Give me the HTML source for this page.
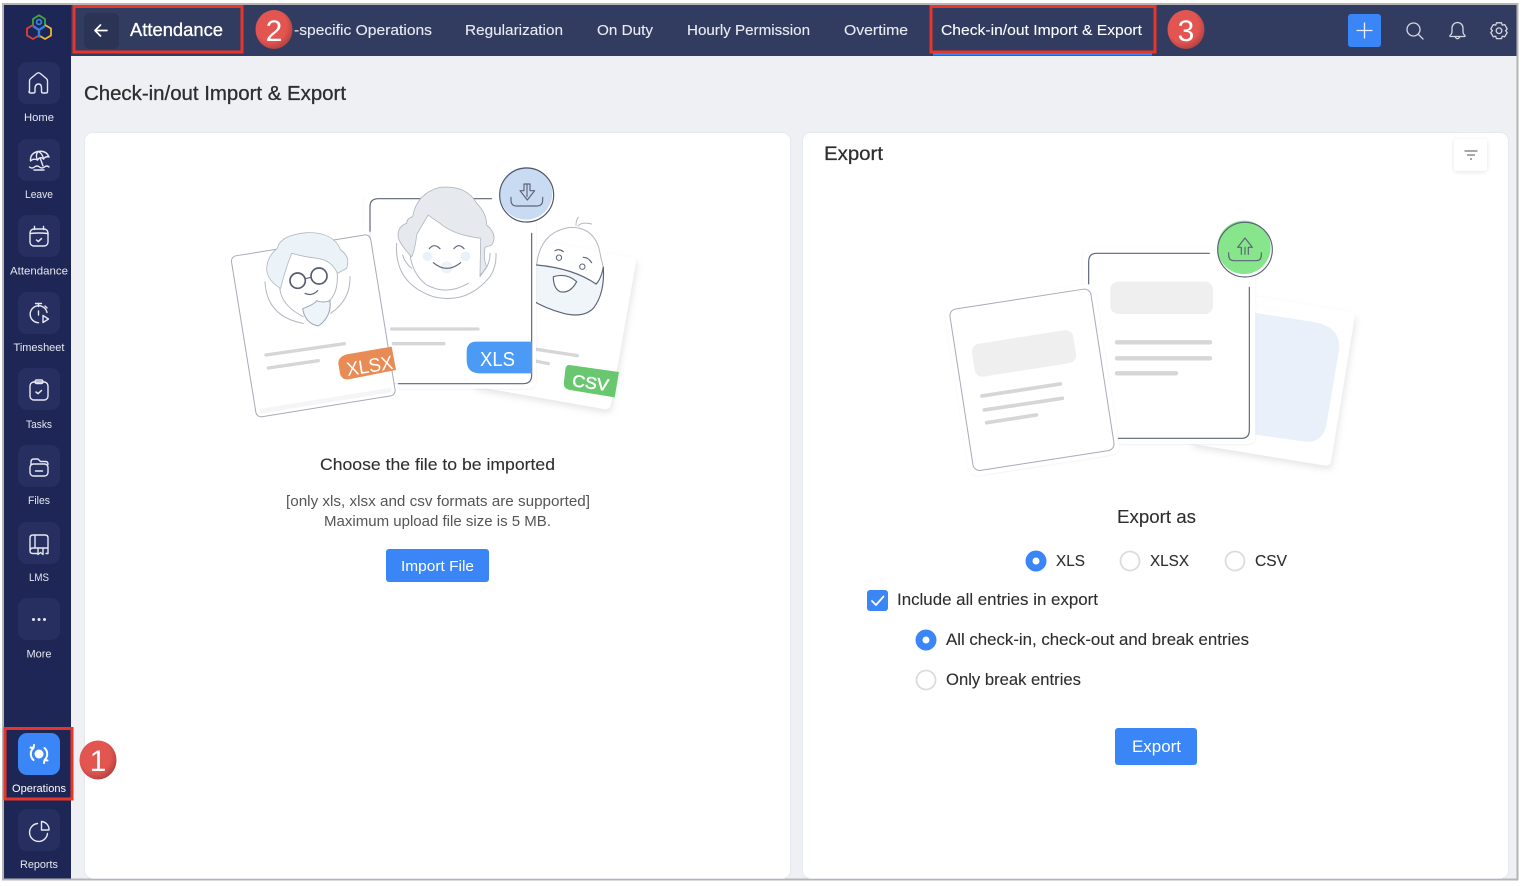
<!DOCTYPE html>
<html lang="en"><head><meta charset="utf-8"><title>Check-in/out Import &amp; Export</title>
<style>
html,body{margin:0;padding:0;background:#fff;width:1524px;height:886px;overflow:hidden}
svg{display:block}
text{font-family:"Liberation Sans",sans-serif}
.side{fill:#e6e8f0;font-size:11px;text-anchor:middle}
.nav{fill:#e9ebf2;font-size:15px;stroke:#e9ebf2;stroke-width:.12}
.dk{fill:#2e2e2e;stroke:#2e2e2e;stroke-width:.12}
.ic{fill:none;stroke:#e6e8f0;stroke-width:1.400;stroke-linecap:round;stroke-linejoin:round}
.ln{fill:none;stroke:#d6d6d6;stroke-width:10;stroke-linecap:round}
.gy{fill:none;stroke:#b3b7c1;stroke-width:3;stroke-linecap:round;stroke-linejoin:round}
.dg{fill:none;stroke:#5e6478;stroke-width:3.500;stroke-linecap:round;stroke-linejoin:round}
</style></head><body>
<svg width="1524" height="886" viewBox="0 0 1524 886" xmlns="http://www.w3.org/2000/svg">
<defs>
<filter id="sh" x="-20%" y="-20%" width="140%" height="140%"><feDropShadow dx="6" dy="10" stdDeviation="10" flood-color="#000" flood-opacity=".1"/></filter>
<filter id="s2" x="-30%" y="-30%" width="160%" height="160%"><feDropShadow dx="0" dy="1" stdDeviation="2.500" flood-color="#000" flood-opacity=".1"/></filter>
<radialGradient id="ball" cx=".42" cy=".4" r=".68"><stop offset=".62" stop-color="#e25551"/><stop offset="1" stop-color="#a83c3a"/></radialGradient>
</defs>

<!-- frame -->
<rect x="3" y="4" width="1514.500" height="875.500" fill="#eef0f4" stroke="#b5b5b5" stroke-width="2"/>
<rect x="4" y="5" width="67" height="873.500" fill="#1d2654"/>
<rect x="71" y="5" width="1445.500" height="51" fill="#323c60"/>

<!-- logo -->
<g fill="none" stroke-width="1.800" stroke-linejoin="round">
<path d="M33 26v-7l6-3.700 6 3.700v7" stroke="#3fa648"/>
<path d="M33 25l-6 3.500v7l6 3.500 5-3" stroke="#e2403a"/>
<path d="M45 25l6 3.500v7l-6 3.500-5-3" stroke="#efb72f"/>
<circle cx="39" cy="22" r="2.400" stroke="#3a7fd8"/>
<path d="M33 26l6 4 6-4M39 30v7.500" stroke="#3a7fd8" stroke-width="2.400"/>
</g>

<!-- sidebar tiles -->
<g fill="#262f60">
<rect x="18" y="62" width="42" height="42" rx="9"/>
<rect x="18" y="139" width="42" height="42" rx="9"/>
<rect x="18" y="215" width="42" height="42" rx="9"/>
<rect x="18" y="292" width="42" height="42" rx="9"/>
<rect x="18" y="368" width="42" height="42" rx="9"/>
<rect x="18" y="445" width="42" height="42" rx="9"/>
<rect x="18" y="522" width="42" height="42" rx="9"/>
<rect x="18" y="598" width="42" height="42" rx="9"/>
<rect x="18" y="809" width="42" height="42" rx="9"/>
</g>
<rect x="18" y="733" width="42" height="42" rx="9" fill="#3a86f6"/>

<!-- sidebar icons -->
<path class="ic" d="M30 91.500v-10.500q0-1.500 1.200-2.500l6-5q1.800-1.400 3.600 0l6 5q1.200 1 1.200 2.500v10.500q0 1.500-1.500 1.500h-3q-1.500 0-1.500-1.500v-3.500q0-4-3-4t-3.500 4v3.500q0 1.500-1.500 1.500h-3q-1.500 0-1.500-1.500z" transform="translate(-.5 0)"/>
<g class="ic"><path d="M30.500 161Q30 153 38 151.500Q46 150 49 157Q45.500 156 43.500 159Q40.500 156 37.500 160Q33.500 158 30.500 161z"/><path d="M38 151.500Q35 155 37.500 160M38 151.500Q42.500 153 43.500 159M40.500 159L43 166"/><path d="M29.500 167q2.500 2 5 0t5 0 5 0 4.500 0M34 170h10"/></g>
<g class="ic"><rect x="30" y="229" width="18" height="17" rx="4"/><path d="M30 233.500q9-1 18 0M34.500 226.500v3M43.500 226.500v3"/><path d="M36.500 240l1.800 1.600 3.200-3" stroke-width="1.500"/></g>
<g class="ic"><path d="M35.500 303.500h6M38.500 303.500v3M45 306l2 2"/><path d="M47 312.500a8.500 8.500 0 1 0-8.500 10.200"/><path d="M38.500 311v4"/><path d="M43 315.500l5.500 3.500-5.500 3.500z"/></g>
<g class="ic"><rect x="30" y="382" width="18" height="18" rx="4"/><rect x="35" y="380" width="8" height="3.500" rx="1.500"/><path d="M36 392l2 1.700 3.500-3.200" stroke-width="1.500"/></g>
<g class="ic"><path d="M31 465v-3q0-3 3-3h4l2.500 2.500h5q2.500 0 2.500 3"/><rect x="30" y="464" width="18" height="12" rx="3.500"/><path d="M35.500 471h7"/></g>
<g class="ic"><path d="M30 551v-13q0-3 3-3h12q3 0 3 3v15.500h-2M35 535v13M30 551q0-3 3-3h15M30 551q0 2.500 3 2.500h4M38 548v6.500l2.500-2 2.500 2v-6.500"/></g>
<g fill="#e6e8f0"><circle cx="33.500" cy="619.500" r="1.500"/><circle cx="39" cy="619.500" r="1.500"/><circle cx="44.500" cy="619.500" r="1.500"/></g>
<g fill="none" stroke="#fff" stroke-width="2" stroke-linecap="round" stroke-linejoin="round"><path d="M33.500 760A8 8 0 0 1 33.500 748M44.500 748A8 8 0 0 1 44.500 760M30.500 747.500l3 .5 .5-3M47.500 760.500l-3-.5-.5 3"/></g>
<circle cx="39" cy="754" r="4.500" fill="#fff"/>
<g class="ic"><path d="M37.500 823.500A9 9 0 1 0 47.500 833.500"/><path d="M41.500 821.500V830H49A8 8 0 0 0 41.500 821.500z"/></g>

<!-- sidebar labels -->
<text class="side" x="39" y="121" textLength="30" lengthAdjust="spacingAndGlyphs">Home</text>
<text class="side" x="39" y="198" textLength="28" lengthAdjust="spacingAndGlyphs">Leave</text>
<text class="side" x="39" y="274.500" textLength="58" lengthAdjust="spacingAndGlyphs">Attendance</text>
<text class="side" x="39" y="351" textLength="51" lengthAdjust="spacingAndGlyphs">Timesheet</text>
<text class="side" x="39" y="428" textLength="26" lengthAdjust="spacingAndGlyphs">Tasks</text>
<text class="side" x="39" y="504" textLength="22" lengthAdjust="spacingAndGlyphs">Files</text>
<text class="side" x="39" y="581" textLength="20" lengthAdjust="spacingAndGlyphs">LMS</text>
<text class="side" x="39" y="657.500" textLength="25" lengthAdjust="spacingAndGlyphs">More</text>
<text class="side" x="39" y="792" textLength="54" lengthAdjust="spacingAndGlyphs" style="fill:#fff">Operations</text>
<text class="side" x="39" y="868" textLength="38" lengthAdjust="spacingAndGlyphs">Reports</text>

<!-- header -->
<rect x="84" y="13" width="35" height="36" rx="6" fill="#2b3455"/>
<path d="M107 30.500H95M100.500 25l-5.500 5.500 5.500 5.500" fill="none" stroke="#fff" stroke-width="1.700" stroke-linecap="round" stroke-linejoin="round"/>
<text x="130" y="36" font-size="18" fill="#fff" stroke="#fff" stroke-width=".3" textLength="93" lengthAdjust="spacingAndGlyphs">Attendance</text>
<text class="nav" x="294" y="35" textLength="138" lengthAdjust="spacingAndGlyphs">-specific Operations</text>
<text class="nav" x="465" y="35" textLength="98" lengthAdjust="spacingAndGlyphs">Regularization</text>
<text class="nav" x="597" y="35" textLength="56" lengthAdjust="spacingAndGlyphs">On Duty</text>
<text class="nav" x="687" y="35" textLength="123" lengthAdjust="spacingAndGlyphs">Hourly Permission</text>
<text class="nav" x="844" y="35" textLength="64" lengthAdjust="spacingAndGlyphs">Overtime</text>
<text class="nav" x="941" y="35" textLength="201" lengthAdjust="spacingAndGlyphs" style="fill:#fff">Check-in/out Import &amp; Export</text>
<rect x="933" y="53" width="219" height="2.500" fill="#3a86f6"/>

<rect x="1348" y="14" width="33" height="33" rx="3" fill="#3a86f6"/>
<path d="M1356.500 30.500h16M1364.500 22.500v16" stroke="#e8f0ff" stroke-width="1.300" fill="none"/>
<g fill="none" stroke="#d4d7e2" stroke-width="1.300" stroke-linecap="round" stroke-linejoin="round">
<circle cx="1413.500" cy="29.500" r="6.500"/><path d="M1418.500 34.500l4.500 4.500"/>
<path d="M1450 35.500q2-1.500 2-4v-3.500a5.500 5.500 0 0 1 11 0v3.500q0 2.500 2 4v1h-15z"/><path d="M1455.500 37.500q2 2.500 4 0"/>
<path d="M1496.500 22.800h5l.8 2.300 2.400-.5 2.500 4.300-1.600 1.800 1.600 1.800-2.500 4.300-2.400-.5-.8 2.300h-5l-.8-2.300-2.400.5-2.500-4.300 1.600-1.800-1.600-1.800 2.500-4.300 2.400.5z"/><circle cx="1499" cy="30.700" r="2.800"/>
</g>

<!-- title -->
<text class="dk" x="84" y="100" font-size="20" style="stroke-width:.3" textLength="262" lengthAdjust="spacingAndGlyphs">Check-in/out Import &amp; Export</text>

<!-- cards -->
<rect x="84.500" y="132.500" width="706" height="746" rx="8" fill="#fff" stroke="#e6e9f0"/>
<rect x="802.500" y="132.500" width="706" height="746" rx="8" fill="#fff" stroke="#e6e9f0"/>

<!-- LEFT ILLUSTRATION -->
<g transform="translate(220 160) scale(.33333)">
 <!-- CSV card -->
 <g transform="translate(836 222) rotate(10)"><rect width="420" height="462" rx="16" fill="#fff" filter="url(#sh)"/></g>
 <path class="ln" d="M930 565L1072 587M930 600L985 611" stroke="#d9d9d9"/>
 <path d="M1048 615L1197 636L1184 712L1050 690Q1028 686 1032 665L1036 628Q1038 614 1048 615z" fill="#68c76f"/>
 <text x="1055" y="678" font-size="50" fill="#fff" stroke="#fff" stroke-width="1.500" transform="rotate(8 1055 678)" textLength="110" lengthAdjust="spacingAndGlyphs">CSV</text>
 <!-- baby -->
 <path d="M950 315Q960 215 1050 202Q1130 200 1142 290L1150 322" fill="#fff" class="gy"/>
 <path d="M950 315Q1060 325 1128 372Q1150 360 1150 322Q1155 400 1120 445Q1090 475 1030 460Q965 440 930 420Z" fill="#eff5f9"/>
 <path d="M950 315Q1060 325 1128 372" class="dg"/>
 <path d="M1150 322Q1155 400 1120 445Q1090 475 1030 460Q975 445 935 420" class="dg"/>
 <path d="M1128 372Q1142 360 1150 322" class="dg" stroke-width="2.500"/>
 <path d="M1000 350Q1040 338 1070 365Q1050 402 1020 395Q1000 385 1000 350z" fill="#fff" stroke="#5e6478" stroke-width="3.500" stroke-linejoin="round"/>
 <circle cx="1017" cy="293" r="8" fill="none" stroke="#5e6478" stroke-width="3"/>
 <circle cx="1087" cy="320" r="8" fill="none" stroke="#5e6478" stroke-width="3"/>
 <path d="M1005 272Q1018 265 1030 275M1090 292Q1105 292 1115 308" class="dg"/>
 <path d="M1068 196Q1068 180 1075 172M1074 198Q1085 185 1115 192" class="gy" stroke-width="2.500"/>

 <!-- middle card -->
 <rect x="432" y="100" width="516" height="586" rx="20" fill="#fff" filter="url(#s2)"/>
 <path d="M815 116H475Q450 116 450 140V645Q450 671 475 671H910Q935 671 935 645V220" class="dg"/>
 <path class="ln" d="M515 507H774M520 551H672"/>
 <path d="M770 545H936V640H780Q740 640 740 600V575Q740 545 770 545z" fill="#4b9af5"/>
 <text x="780" y="618" font-size="62" fill="#fff" textLength="105" lengthAdjust="spacingAndGlyphs">XLS</text>
 <!-- woman -->
 <path d="M530 250Q522 370 640 410Q740 435 810 350Q830 320 828 280" class="gy"/>
 <path d="M570 280Q575 340 620 375Q680 408 745 370" class="gy" stroke-width="2.500"/>
 <path d="M578 170Q590 100 660 82Q740 75 770 130Q800 160 800 195Q835 225 815 255L795 262Q790 300 800 320L780 350L782 235Q700 225 660 190Q630 170 625 165Q600 205 590 225Q585 270 575 290Q545 260 535 235Q530 200 560 190Q560 175 578 170z" fill="#e6e9ee" stroke="#b3b7c1" stroke-width="2.500" stroke-linejoin="round"/>
 <circle cx="622" cy="289" r="14" fill="#eaf1f8"/><circle cx="737" cy="289" r="14" fill="#eaf1f8"/><circle cx="680" cy="322" r="18" fill="#eef3f9"/>
 <path d="M628 266Q642 248 660 266M702 266Q716 248 732 266M640 308Q680 342 722 308" class="dg" stroke-width="3"/>
 <path d="M548 285Q552 305 575 325M810 280Q810 320 780 345" class="gy" stroke-width="2.500"/>

 <!-- front card -->
 <g transform="translate(32 290) rotate(-9.200)"><rect x="-12" y="-12" width="447" height="513" rx="24" fill="#fff" opacity=".85"/><rect width="423" height="489" rx="16" fill="#fff" stroke="#a6abb7" stroke-width="3"/><path d="M12 472H412" stroke="#f5f5f5" stroke-width="14" fill="none"/></g>
 <path class="ln" d="M138 585L373 551M145 624L295 602"/>
 <path d="M380 583L515 560L528 630L385 658Q365 660 360 640L355 610Q355 590 380 583z" fill="#e98b55"/>
 <text x="383" y="648" font-size="58" fill="#fff" transform="rotate(-9 383 648)" textLength="140" lengthAdjust="spacingAndGlyphs">XLSX</text>
 <!-- man -->
 <path d="M135 365Q140 470 250 490M390 350Q392 420 332 460" class="gy" stroke-width="2.500"/>
 <path d="M180 360Q170 430 250 470M352 340Q355 400 325 425" class="gy" stroke-width="2.500"/>
 <path d="M140 330Q140 290 172 265Q180 225 260 218Q340 215 362 270Q392 290 380 325L352 340Q335 300 290 295Q250 290 215 280Q195 330 182 385Q145 365 140 330z" fill="#ecf3f8" stroke="#b3b7c1" stroke-width="2.500" stroke-linejoin="round"/>
 <circle cx="233" cy="362" r="23" fill="#fff" stroke="#555b70" stroke-width="5"/>
 <circle cx="297" cy="348" r="24" fill="#fff" stroke="#555b70" stroke-width="5"/>
 <path d="M256 356L273 352" class="dg"/>
 <path d="M255 400Q275 410 293 392" class="dg" stroke-width="2.500"/>
 <path d="M248 446Q285 432 290 422Q310 430 330 422Q335 470 295 498Q255 490 248 446z" fill="#eef5fa" stroke="#9da3b1" stroke-width="3" stroke-linejoin="round"/>

 <!-- circle -->
 <circle cx="920" cy="102" r="81" fill="#fff"/>
 <circle cx="918" cy="100" r="79" fill="#c9daf3"/>
 <circle cx="920" cy="105" r="81" fill="none" stroke="#50566a" stroke-width="3.500"/>
 <path d="M873 112V120Q873 138 890 138H950Q968 138 968 120V112" class="dg"/>
 <path d="M912 72V92H900L922 120L944 92H930V72z" class="dg" stroke-width="3"/><path d="M921 72V110" class="dg" stroke-width="2.500"/>
</g>

<text class="dk" x="320" y="470" font-size="17" textLength="235" lengthAdjust="spacingAndGlyphs">Choose the file to be imported</text>
<text x="286" y="506" font-size="15" fill="#555" textLength="304" lengthAdjust="spacingAndGlyphs">[only xls, xlsx and csv formats are supported]</text>
<text x="324" y="526" font-size="15" fill="#555" textLength="227" lengthAdjust="spacingAndGlyphs">Maximum upload file size is 5 MB.</text>
<rect x="386" y="549" width="103" height="33" rx="3" fill="#3a86f6"/>
<text x="401" y="571" font-size="15" fill="#fff" textLength="73" lengthAdjust="spacingAndGlyphs">Import File</text>

<!-- RIGHT -->
<text class="dk" x="824" y="160" font-size="19" style="stroke-width:.25" textLength="59" lengthAdjust="spacingAndGlyphs">Export</text>
<rect x="1454" y="139" width="33" height="32" rx="3" fill="#fff" filter="url(#s2)"/>
<path d="M1464.500 151h13M1467 155h8M1470 159h2" stroke="#8a8a8a" stroke-width="1.400" fill="none"/>

<g transform="translate(940 210) scale(.33333)">
 <g transform="translate(826 240) rotate(9.300)"><rect width="425" height="466" rx="14" fill="#fff" filter="url(#sh)"/></g>
 <path d="M930 306L1120 336Q1205 350 1197 420L1160 640Q1150 700 1095 695L930 672z" fill="#e9f0f9"/>
 <rect x="428" y="112" width="518" height="590" rx="20" fill="#fff" filter="url(#s2)"/>
 <path d="M808 130H470Q446 130 446 155V660Q446 685 470 685H905Q928 685 928 660V232" class="dg" stroke-width="3"/>
 <rect x="511" y="215" width="308" height="97" rx="24" fill="#efefef"/>
 <path d="M531 397H810M531 445H810M531 490H708" stroke="#d6d6d6" stroke-width="13" stroke-linecap="round" fill="none"/>

 <g transform="translate(27 300) rotate(-8.800)"><rect x="-14" y="-14" width="456" height="518" rx="26" fill="#fff" filter="url(#s2)"/><rect width="428" height="490" rx="20" fill="#fff" stroke="#a6abb7" stroke-width="3"/></g>
 <rect x="0" y="0" width="308" height="100" rx="24" fill="#efefef" transform="translate(92 405) rotate(-9)"/>
 <path d="M126 558L361 522M133 600L367 565M140 638L289 615" stroke="#d6d6d6" stroke-width="11" stroke-linecap="round" fill="none"/>

 <circle cx="915" cy="118" r="84" fill="#fff"/>
 <circle cx="912" cy="112" r="80" fill="#87e58c"/>
 <circle cx="915" cy="119" r="82" fill="none" stroke="#5a6076" stroke-width="3.500"/>
 <path d="M866 128V135Q866 152 882 152H948Q964 152 964 135V128" class="dg" stroke-width="3"/>
 <path d="M904 133V112H893L915 84L937 112H925V133" class="dg" stroke-width="3"/><path d="M915 112V133" class="dg" stroke-width="2.500"/>
</g>

<text class="dk" x="1117" y="523" font-size="18" textLength="79" lengthAdjust="spacingAndGlyphs">Export as</text>

<circle cx="1036" cy="561" r="10.500" fill="#3a86f6"/><circle cx="1036" cy="561" r="3.500" fill="#fff"/>
<text class="dk" x="1056" y="566" font-size="16" textLength="29" lengthAdjust="spacingAndGlyphs">XLS</text>
<circle cx="1130" cy="561" r="9.500" fill="#fff" stroke="#dcdcdc" stroke-width="1.800"/>
<text class="dk" x="1150" y="566" font-size="16" textLength="39" lengthAdjust="spacingAndGlyphs">XLSX</text>
<circle cx="1235" cy="561" r="9.500" fill="#fff" stroke="#dcdcdc" stroke-width="1.800"/>
<text class="dk" x="1255" y="566" font-size="16" textLength="32" lengthAdjust="spacingAndGlyphs">CSV</text>

<rect x="867" y="590" width="21" height="21" rx="3" fill="#3a86f6"/>
<path d="M872 601l4 4 7.500-8.500" fill="none" stroke="#fff" stroke-width="1.800" stroke-linecap="round" stroke-linejoin="round"/>
<text class="dk" x="897" y="605" font-size="16.500" textLength="201" lengthAdjust="spacingAndGlyphs">Include all entries in export</text>

<circle cx="926" cy="640" r="10.500" fill="#3a86f6"/><circle cx="926" cy="640" r="3.500" fill="#fff"/>
<text class="dk" x="946" y="645" font-size="16.500" textLength="303" lengthAdjust="spacingAndGlyphs">All check-in, check-out and break entries</text>
<circle cx="926" cy="680" r="9.500" fill="#fff" stroke="#dcdcdc" stroke-width="1.800"/>
<text class="dk" x="946" y="685" font-size="16.500" textLength="135" lengthAdjust="spacingAndGlyphs">Only break entries</text>

<rect x="1115" y="728" width="82" height="37" rx="3" fill="#3a86f6"/>
<text x="1132" y="752" font-size="16.500" fill="#fff" textLength="49" lengthAdjust="spacingAndGlyphs">Export</text>

<!-- annotations -->
<g fill="none" stroke="#e8352a" stroke-width="3">
<rect x="74" y="6.500" width="168" height="45.500"/>
<rect x="931" y="6.500" width="224" height="45.500"/>
<rect x="5" y="728.500" width="67" height="70.500"/>
</g>
<ellipse cx="274" cy="29.500" rx="18.500" ry="19.500" fill="url(#ball)"/>
<text x="274" y="41" font-size="30" fill="#fff" text-anchor="middle">2</text>
<ellipse cx="1186" cy="29.500" rx="18.500" ry="19.500" fill="url(#ball)"/>
<text x="1186" y="41" font-size="30" fill="#fff" text-anchor="middle">3</text>
<ellipse cx="98" cy="760" rx="18.500" ry="19.500" fill="url(#ball)"/>
<text x="98" y="771" font-size="30" fill="#fff" text-anchor="middle">1</text>
</svg>
</body></html>
